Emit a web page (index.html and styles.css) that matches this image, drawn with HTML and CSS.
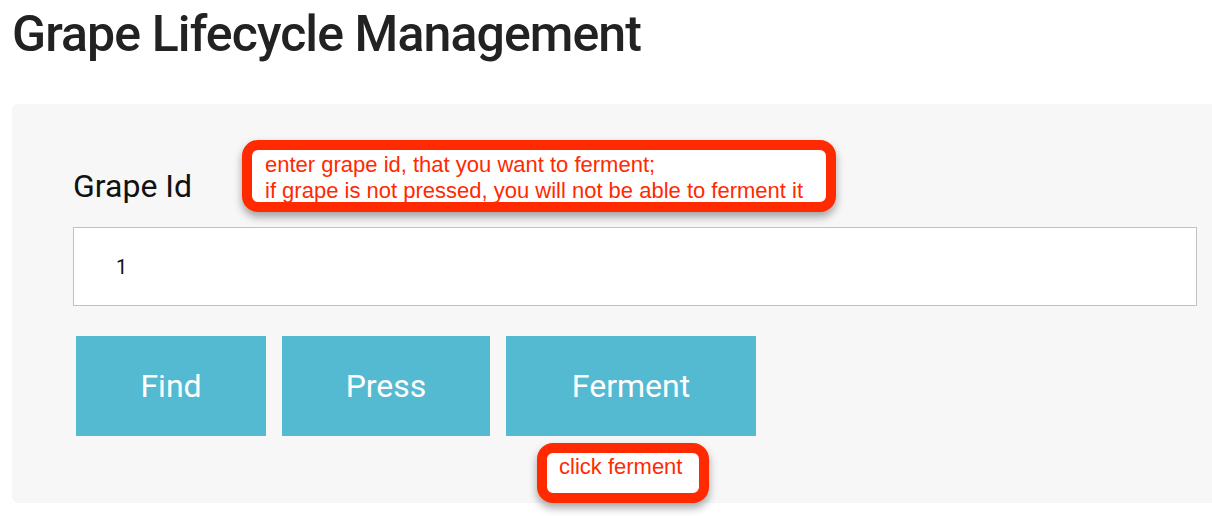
FILE: index.html
```html
<!DOCTYPE html>
<html>
<head>
<meta charset="utf-8">
<link rel="stylesheet" href="styles.css">
</head>
<body>
<h1 class="title">Grape Lifecycle Management</h1>
<div class="panel">
  <label class="label" for="gid">Grape Id</label>
  <input class="field" id="gid" type="text" value="1">
  <div class="actions">
    <button class="btn btn-find">Find</button>
    <button class="btn btn-press">Press</button>
    <button class="btn btn-ferment">Ferment</button>
  </div>
</div>
<div class="note note-id">enter grape id, that you want to ferment;<br>if grape is not pressed, you will not be able to ferment it</div>
<div class="note note-click">click ferment</div>
</body>
</html>
```
FILE: styles.css
```css
html, body {
  margin: 0;
  padding: 0;
  background: #ffffff;
  overflow: hidden;
  width: 1212px;
  height: 516px;
  position: relative;
}
body {
  font-family: Roboto, "Liberation Sans", sans-serif;
  color: #222222;
}
.title {
  margin: 0;
  padding: 5px 0 0 12px;
  height: 98px;
  box-sizing: border-box;
  font-size: 50px;
  font-weight: 500;
  line-height: 58px;
  color: #222222;
  letter-spacing: -0.9px;
}
.panel {
  margin-left: 12px;
  width: 1240px;
  height: 399px;
  box-sizing: border-box;
  background: #f7f7f7;
  border-radius: 6px;
  padding: 60px 55px 0 61px;
  display: flex;
  flex-direction: column;
  margin-top: 6px;
}
.label {
  font-size: 32px;
  line-height: 40px;
  color: #111111;
  height: 63px;
  padding-top: 2px;
  box-sizing: border-box;
}
.field {
  width: 1124px;
  height: 79px;
  box-sizing: border-box;
  border: 1px solid #c2c2c2;
  background: #ffffff;
  padding: 0 0 0 42px;
  font-family: Roboto, sans-serif;
  font-size: 20px;
  color: #111111;
  outline: none;
  margin-top: 0;
}
.actions {
  display: flex;
  gap: 16px;
  margin-top: 30px;
  padding-left: 3px;
}
.btn {
  height: 100px;
  border: none;
  background: #54bad2;
  color: #ffffff;
  font-family: Roboto, sans-serif;
  font-size: 32px;
  font-weight: 400;
  padding: 0;
}
.btn-find { width: 190px; }
.btn-press { width: 208px; }
.btn-ferment { width: 250px; }
.note {
  position: absolute;
  background: #ffffff;
  border: 10px solid #ff2a00;
  border-radius: 16px;
  box-shadow: 0 5px 9px rgba(0, 0, 0, 0.35);
  color: #ff2a00;
  font-family: "Liberation Sans", Arial, sans-serif;
  font-size: 22px;
  line-height: 26px;
  box-sizing: border-box;
}
.note-id {
  left: 242px;
  top: 140px;
  width: 594px;
  height: 72px;
  padding: 2px 0 0 13px;
}
.note-click {
  left: 537px;
  top: 443px;
  width: 172px;
  height: 60px;
  padding: 1px 0 0 12px;
}
```
